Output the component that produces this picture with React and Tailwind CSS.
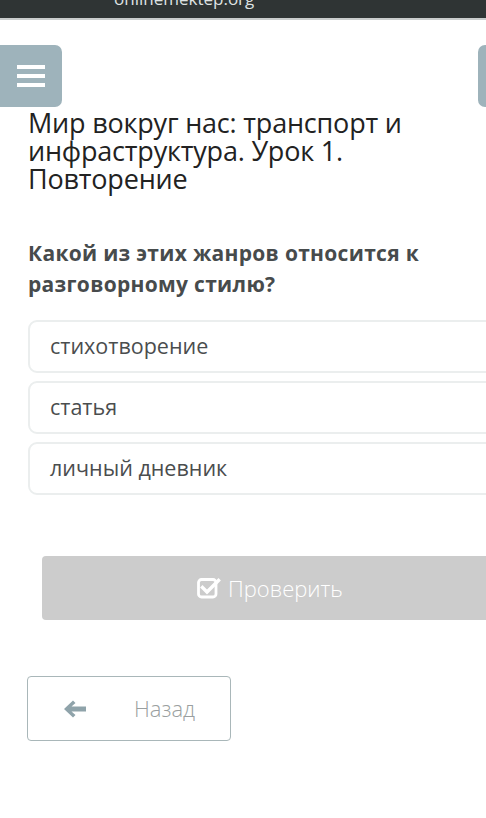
import React from 'react';

const options = ['стихотворение', 'статья', 'личный дневник'];

const CheckSquareIcon = () => (
    <svg width="24" height="22" viewBox="0 0 24 22" fill="none">
        <rect x="1.5" y="2.5" width="17.5" height="17.5" rx="3" stroke="white" strokeWidth="2.8" />
        <path d="M5.5 10.5 L10 15 L21.5 3.5" stroke="white" strokeWidth="3.4" strokeLinecap="square" />
    </svg>
);

const ArrowLeftIcon = () => (
    <svg width="22" height="18" viewBox="0 0 22 18" fill="#8fa3aa">
        <path d="M0 9 L9 0.5 L11.5 3 L7.5 6.5 L22 6.5 L22 11.5 L7.5 11.5 L11.5 15 L9 17.5 Z" />
    </svg>
);

const App = () => {
    return (
        <div className="w-[486px] h-[818px] overflow-hidden bg-white relative font-['Open_Sans',sans-serif]">
            {/* browser address bar */}
            <div className="h-[20px] bg-[#2f3434] border-b-2 border-[#c9cccc] relative overflow-hidden">
                <span className="absolute left-[114px] top-[-14px] text-[17px] text-[#dfe2e2]">onlinemektep.org</span>
            </div>

            <div className="w-[540px]">
                <div className="flex justify-between mt-[25px] h-[62px]">
                    <div className="w-[62px] h-[62px] bg-[#9eb3bb] rounded-r-[7px] flex flex-col justify-center items-center gap-[5px]">
                        <div className="w-[28px] h-[4px] bg-white"></div>
                        <div className="w-[28px] h-[4px] bg-white"></div>
                        <div className="w-[28px] h-[4px] bg-white"></div>
                    </div>
                    <div className="w-[62px] h-[62px] bg-[#9eb3bb] rounded-[7px]"></div>
                </div>

                <h1 className="ml-[28px] mt-[2px] w-[440px] text-[27px] leading-[28px] text-[#222] tracking-[-0.2px]">
                    Мир вокруг нас: транспорт и инфраструктура. Урок 1. Повторение
                </h1>

                <p className="ml-[28px] mt-[45px] w-[440px] text-[21px] leading-[31px] font-bold text-[#474b4c] tracking-[0.3px]">
                    Какой из этих жанров относится к разговорному стилю?
                </p>

                <div className="ml-[28px] mt-[20px] flex flex-col gap-[8px]">
                    {options.map(o => (
                        <div key={o} className="h-[53px] border-2 border-[#ebeeee] rounded-[9px] flex items-center pl-[20px] text-[21.5px] text-[#4a4d4e]">
                            {o}
                        </div>
                    ))}
                </div>

                <div className="ml-[42px] mt-[61px] h-[64px] bg-[#cccccc] rounded-[4px] flex items-center pl-[155px] gap-[7px] text-[22px] text-white font-light">
                    <CheckSquareIcon />
                    <span>Проверить</span>
                </div>

                <div className="ml-[27px] mt-[56px] w-[204px] h-[65px] border border-[#a9b7b9] rounded-[4px] flex items-center pl-[36px] text-[22px] text-[#9a9fa0] font-light">
                    <ArrowLeftIcon />
                    <span className="ml-[48px]">Назад</span>
                </div>
            </div>
        </div>
    );
};

export default App;
